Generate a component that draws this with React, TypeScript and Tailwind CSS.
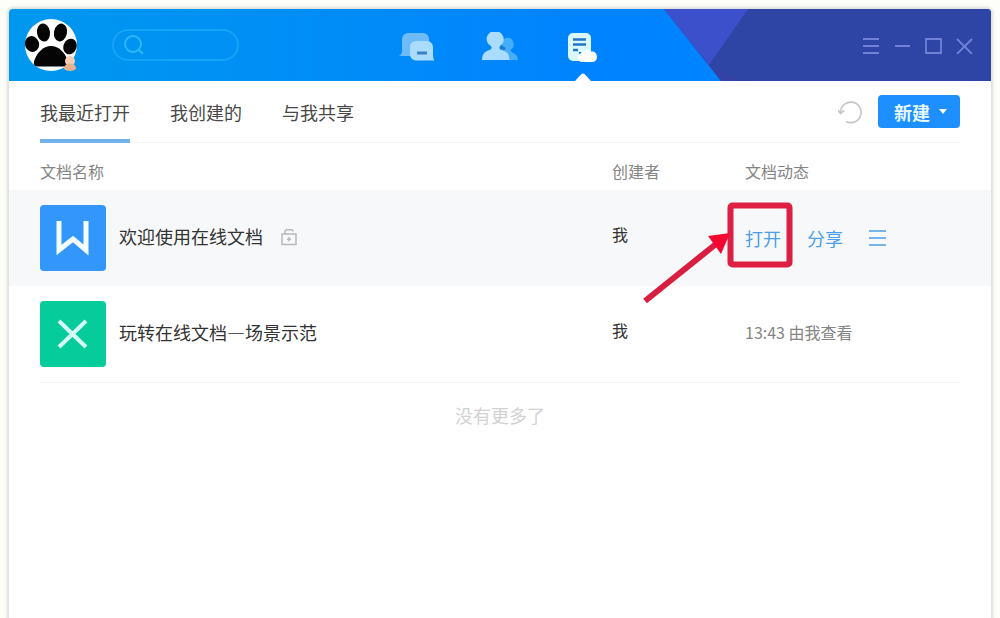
import { useState } from 'react';
import clsx from 'clsx';

const tabs = ['我最近打开', '我创建的', '与我共享'];

function Avatar() {
  return (
    <svg viewBox="0 0 54 54" className="h-[54px] w-[54px]" aria-hidden="true">
      <circle cx="27" cy="27" r="26" fill="#fdfdfd" />
      <g fill="#050505">
        <ellipse cx="19.500" cy="14.500" rx="6.5" ry="9" transform="rotate(-8 19.5 14.5)" />
        <ellipse cx="36.500" cy="14.500" rx="6.5" ry="9" transform="rotate(12 36.5 14.5)" />
        <ellipse cx="8" cy="26" rx="7" ry="8" transform="rotate(-20 8 26)" />
        <ellipse cx="46" cy="28.500" rx="6.5" ry="8" transform="rotate(22 46 28.5)" />
        <path d="M27 28c-8 0-14 7-16.500 14C9 46.500 10 48.500 15 48.500h24c5 0 6-2 4.500-6.500C41 35 35 28 27 28z" />
      </g>
      <circle cx="46" cy="43" r="5" fill="#f4cdb2" />
      <path d="M40 51c0-4 3-5.500 6-5.500s6 1.500 6 5.500c-3 2.500-9 2.500-12 0z" fill="#e5b294" />
    </svg>
  );
}

function ChatIcon() {
  return (
    <svg viewBox="0 0 36 30" className="h-[30px] w-9" aria-hidden="true">
      <path d="M9 1h15a6 6 0 0 1 6 6v12a5 5 0 0 1-5 5H0c2-1 3-3 3-5V7a6 6 0 0 1 6-6z" fill="#6dbbfa" />
      <path d="M17 9h11a6 6 0 0 1 6 6v8c0 2 .5 4 1.500 5.500H17a6 6 0 0 1-6-6V15a6 6 0 0 1 6-6z" fill="#a9dcff" />
      <path d="M18 21h10" stroke="#3b82c4" strokeWidth="3" />
    </svg>
  );
}

function ContactsIcon() {
  return (
    <svg viewBox="0 0 36 30" className="h-[30px] w-9" aria-hidden="true">
      <path d="M24 6a6.500 6.500 0 0 1 4.500 12c0 3 7.500 3 7.500 10H20V8z" fill="#45aefa" />
      <path d="M13.500 0a6.500 7.500 0 0 1 4.500 14c-.8 1-.8 3 .5 3.500 6 1.500 9 4.500 9 10.500H0c0-6 3-9 8.500-10.500 1.300-.5 1.300-2.500.3-3.500A6.500 7.500 0 0 1 13.500 0z" fill="#a9dcff" />
      <path d="M19 14.500l4 3" stroke="#2878c8" strokeWidth="3" />
    </svg>
  );
}

function DocsIcon() {
  return (
    <svg viewBox="0 0 36 30" className="h-[30px] w-9" aria-hidden="true">
      <path d="M8 1h13a5 5 0 0 1 5 5v14H14v9H8a5 5 0 0 1-5-5V6a5 5 0 0 1 5-5z" fill="#d9f7ff" />
      <path d="M8 7.500h13M8 12.500h13M8 18h5" stroke="#2675c4" strokeWidth="2.500" />
      <path d="M17 30a4.500 4.500 0 0 1-1-8.800 6 6 0 0 1 10-1.500C30 19 32 22 32 25a5 5 0 0 1-4 5z" fill="#fff" />
    </svg>
  );
}

function WindowControls() {
  const controls = [
    { label: '菜单', d: 'M0 3h16M0 10h16M0 17h16' },
    { label: '最小化', d: 'M1 10h15' },
    { label: '最大化', d: 'M1 3h15v14H1z' },
    { label: '关闭', d: 'M1 3l15 15M16 3L1 18' },
  ];
  return (
    <div className="flex items-center justify-end gap-[14px] pr-[18px]">
      {controls.map((c) => (
        <button key={c.label} type="button" aria-label={c.label}>
          <svg viewBox="0 0 17 18" className="h-[18px] w-[17px]" fill="none" stroke="#6f82d6" strokeWidth="1.800">
            <path d={c.d} />
          </svg>
        </button>
      ))}
    </div>
  );
}

function TitleBar() {
  const [active, setActive] = useState(2);
  const nav = [
    { label: '消息', icon: <ChatIcon /> },
    { label: '联系人', icon: <ContactsIcon /> },
    { label: '文档', icon: <DocsIcon /> },
  ];
  return (
    <header className="relative grid h-[72px] grid-cols-[1fr_auto_1fr] overflow-hidden rounded-t bg-linear-to-r from-[#0098ee] to-[#0083ff] to-60%">
      <svg viewBox="0 0 330 72" className="absolute top-0 right-0 h-[72px] w-[330px]" aria-hidden="true">
        <path d="M3 0h327v72H60z" fill="#2f45a6" />
        <path d="M3 0h84L48 56z" fill="#3c50cc" />
        <path d="M48 56L60 72h22z" fill="#393fa0" opacity=".5" />
      </svg>
      <div className="relative flex items-center gap-[34px] pl-[15px]">
        <Avatar />
        <label className="flex h-8 w-[127px] items-center gap-2 rounded-full border-2 border-[#14a4f8] pr-3 pl-[10px]">
          <svg viewBox="0 0 20 20" className="h-5 w-5 shrink-0" fill="none" stroke="#2bb8fd" strokeWidth="2">
            <circle cx="9" cy="9" r="8" />
            <path d="M15 15l4 4" />
          </svg>
          <input type="search" aria-label="搜索" className="w-full min-w-0 bg-transparent text-sm text-white outline-none" />
        </label>
      </div>
      <nav className="relative flex gap-[47px]">
        {nav.map((item, i) => (
          <button
            key={item.label}
            type="button"
            aria-label={item.label}
            onClick={() => setActive(i)}
            className="relative flex items-center pt-1"
          >
            {item.icon}
            {active === i && (
              <svg viewBox="0 0 16 8" className="absolute bottom-0 left-[10px] h-2 w-4" aria-hidden="true">
                <path d="M0 8l6.500-7q1.500-1.200 3 0L16 8z" fill="#fff" />
              </svg>
            )}
          </button>
        ))}
      </nav>
      <div className="relative flex justify-end">
        <WindowControls />
      </div>
    </header>
  );
}

function Toolbar() {
  const [tab, setTab] = useState(0);
  return (
    <div className="mx-[31px] flex h-[62px] items-stretch justify-between border-b border-[#f4f4f4]">
      <div className="flex gap-10">
        {tabs.map((t, i) => (
          <button
            key={t}
            type="button"
            onClick={() => setTab(i)}
            className={clsx(
              '-mb-px border-b-4 pt-1 text-lg text-[#484848]',
              tab === i ? 'border-[#73b1ea]' : 'border-transparent',
            )}
          >
            {t}
          </button>
        ))}
      </div>
      <div className="flex items-center gap-4">
        <button type="button" aria-label="刷新">
          <svg viewBox="0 0 24 24" className="h-6 w-6" fill="none" stroke="#c8c8c8" strokeWidth="1.700">
            <path d="M2.500 13A10.300 10.300 0 1 1 8 21.500" />
            <path d="M0 10l2.500 3.500L6 10.500" />
          </svg>
        </button>
        <button type="button" className="flex h-[33px] w-[82px] items-center justify-center gap-2 rounded bg-[#1e8fff] pl-1 text-lg font-bold text-[#e6f8ff]">
          新建
          <svg viewBox="0 0 10 6" className="h-[6px] w-[10px]" aria-hidden="true">
            <path d="M1 0h8L5 5z" fill="#fff" />
          </svg>
        </button>
      </div>
    </div>
  );
}

function WriterIcon() {
  return (
    <svg viewBox="0 0 66 66" className="h-[66px] w-[66px] shrink-0" aria-hidden="true">
      <rect width="66" height="66" rx="4" fill="#3296fa" />
      <path d="M19 16v29l14-11 13 11V16" fill="none" stroke="#f4fdff" strokeWidth="5" />
    </svg>
  );
}

function SheetIcon() {
  return (
    <svg viewBox="0 0 66 66" className="h-[66px] w-[66px] shrink-0" aria-hidden="true">
      <rect width="66" height="66" rx="4" fill="#05cc9a" />
      <path d="M19 20l27 26M46 20L19 46" fill="none" stroke="#d5fff8" strokeWidth="4" />
    </svg>
  );
}

function OpenHint() {
  return (
    <svg viewBox="0 0 152 102" className="pointer-events-none absolute -top-[22px] -left-[103px] h-[102px] w-[152px] max-w-none" aria-hidden="true">
      <rect x="88.500" y="3.500" width="59" height="59" rx="2" fill="none" stroke="#dc1f43" strokeWidth="6" />
      <path d="M3 99l71-57" stroke="#d81f42" strokeWidth="6" />
      <path d="M88 31L66 34l13 18z" fill="#f5082f" />
    </svg>
  );
}

function DocumentTable() {
  return (
    <table className="w-full table-fixed border-collapse text-left">
      <colgroup>
        <col />
        <col className="w-[133px]" />
        <col className="w-[246px]" />
      </colgroup>
      <thead>
        <tr className="h-[47px] text-base text-[#858585]">
          <th className="pt-2 pl-[31px] font-normal">文档名称</th>
          <th className="pt-2 font-normal">创建者</th>
          <th className="pt-2 font-normal">文档动态</th>
        </tr>
      </thead>
      <tbody>
        <tr className="h-24 bg-[#f7f8fa] text-[#333]">
          <td className="pl-[31px]">
            <div className="flex items-center gap-[13px]">
              <WriterIcon />
              <span className="pb-1 text-lg">欢迎使用在线文档</span>
              <svg viewBox="0 0 18 18" className="ml-1 h-[18px] w-[18px]" fill="none" stroke="#b8b8b8" strokeWidth="1.500" aria-hidden="true">
                <path d="M2 5h14v10.500H2zM5 5V2.500Q5 .8 7 .8h4q2 0 2 1.700" />
                <path d="M9 8v4.500M7 10.200h4" />
              </svg>
            </div>
          </td>
          <td className="pb-2 text-base">我</td>
          <td>
            <div className="flex items-center gap-[26px] text-lg text-[#4a9fe8]">
              <div className="relative">
                <button type="button">打开</button>
                <OpenHint />
              </div>
              <button type="button">分享</button>
              <button type="button" aria-label="更多">
                <svg viewBox="0 0 18 18" className="h-[18px] w-[18px]" stroke="#75b5ee" strokeWidth="1.800">
                  <path d="M0 2h17M0 9h17M0 16h17" />
                </svg>
              </button>
            </div>
          </td>
        </tr>
        <tr className="h-24 text-[#333]">
          <td className="pl-[31px]">
            <div className="flex items-center gap-[13px]">
              <SheetIcon />
              <span className="pb-1 text-lg">玩转在线文档—场景示范</span>
            </div>
          </td>
          <td className="pb-2 text-base">我</td>
          <td className="pb-1 text-base text-[#858585]">13:43 由我查看</td>
        </tr>
      </tbody>
    </table>
  );
}

export default function App() {
  return (
    <div lang="zh-CN" className="flex min-h-screen flex-col bg-[#fdfdf9] px-[9px] pt-[9px] font-['Noto_Sans_CJK_SC',sans-serif]">
      <div className="flex-1 rounded-t bg-white shadow-[0_0_3px_2px_#dededa]">
        <TitleBar />
        <main>
          <Toolbar />
          <DocumentTable />
          <hr className="mx-[31px] border-[#f4f4f4]" />
          <p className="pt-[18px] text-center text-lg text-[#d2d2d2]">没有更多了</p>
        </main>
      </div>
    </div>
  );
}
